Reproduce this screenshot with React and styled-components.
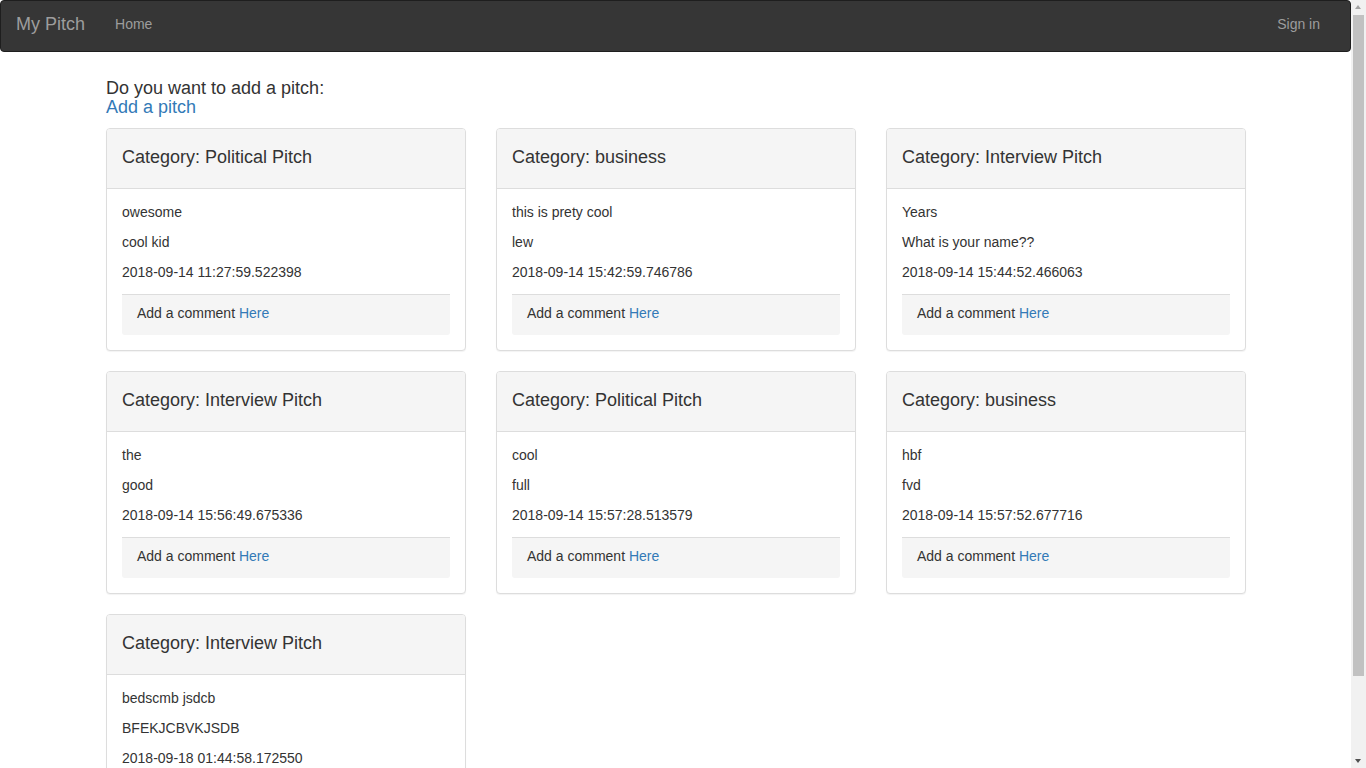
import React from "react";
import styled, { createGlobalStyle } from "styled-components";

const pitches = [
  { category: "Political Pitch", pitch: "owesome", title: "cool kid", posted: "2018-09-14 11:27:59.522398" },
  { category: "business", pitch: "this is prety cool", title: "lew", posted: "2018-09-14 15:42:59.746786" },
  { category: "Interview Pitch", pitch: "Years", title: "What is your name??", posted: "2018-09-14 15:44:52.466063" },
  { category: "Interview Pitch", pitch: "the", title: "good", posted: "2018-09-14 15:56:49.675336" },
  { category: "Political Pitch", pitch: "cool", title: "full", posted: "2018-09-14 15:57:28.513579" },
  { category: "business", pitch: "hbf", title: "fvd", posted: "2018-09-14 15:57:52.677716" },
  { category: "Interview Pitch", pitch: "bedscmb jsdcb", title: "BFEKJCBVKJSDB", posted: "2018-09-18 01:44:58.172550" },
];

const App = () => {
  return (
    <>
      <GlobalStyle />
      <Navbar>
        <Brand href="#">My Pitch</Brand>
        <NavLink href="#">Home</NavLink>
        <NavSpacer />
        <NavLink href="#">Sign in</NavLink>
      </Navbar>
      <Container>
        <Intro>
          Do you want to add a pitch:
          <br />
          <Link href="#">Add a pitch</Link>
        </Intro>
        <Row>
          {pitches.map((p, i) => (
            <Col key={i}>
              <Panel>
                <PanelHeading>
                  <PanelTitle>Category: {p.category}</PanelTitle>
                </PanelHeading>
                <PanelBody>
                  <Text>{p.pitch}</Text>
                  <Text>{p.title}</Text>
                  <Text>{p.posted}</Text>
                  <PanelFooter>
                    Add a comment <Link href="#">Here</Link>
                  </PanelFooter>
                </PanelBody>
              </Panel>
            </Col>
          ))}
        </Row>
      </Container>
      <Scrollbar>
        <ArrowUp />
        <Thumb />
        <ArrowDown />
      </Scrollbar>
    </>
  );
};

const GlobalStyle = createGlobalStyle`
  html, body {
    margin: 0;
  }
  body {
    margin-right: 15px;
    font-family: "Liberation Sans", Arial, sans-serif;
    font-size: 14px;
    line-height: 1.42857;
    color: #333;
    background: #fff;
  }
  * {
    box-sizing: border-box;
  }
`;

const Navbar = styled.nav`
  display: flex;
  align-items: flex-start;
  height: 52px;
  padding: 0 15px 0 0;
  margin-bottom: 27px;
  background-color: #363636;
  border: 1px solid #1e1e1e;
  border-radius: 4px;
`;

const Brand = styled.a`
  padding: 13px 15px 17px;
  font-size: 18px;
  line-height: 20px;
  color: #9d9d9d;
  text-decoration: none;
`;

const NavLink = styled.a`
  padding: 13px 15px 17px;
  line-height: 20px;
  color: #9d9d9d;
  text-decoration: none;
`;

const NavSpacer = styled.div`
  flex: 1;
`;

const Container = styled.div`
  width: 1171px;
  margin: 0 auto;
  padding: 0 15px 0 16px;
`;

const Intro = styled.h4`
  margin: 0 0 11px;
  font-size: 18px;
  font-weight: 500;
  line-height: 19px;
`;

const Link = styled.a`
  color: #337ab7;
  text-decoration: none;
`;

const Row = styled.div`
  display: flex;
  flex-wrap: wrap;
  margin: 0 -15px;
`;

const Col = styled.div`
  width: 390px;
  padding: 0 15px;
`;

const Panel = styled.div`
  margin-bottom: 20px;
  background: #fff;
  border: 1px solid #ddd;
  border-radius: 4px;
  box-shadow: 0 1px 1px rgba(0, 0, 0, 0.05);
`;

const PanelHeading = styled.div`
  padding: 10px 15px;
  background-color: #f5f5f5;
  border-bottom: 1px solid #ddd;
  border-radius: 3px 3px 0 0;
`;

const PanelTitle = styled.h4`
  margin: 9px 0 11px;
  font-size: 18px;
  font-weight: 500;
  line-height: 19px;
`;

const PanelBody = styled.div`
  padding: 14px 15px 15px;
`;

const Text = styled.p`
  margin: 0 0 10px;

  &:nth-of-type(3) {
    margin-bottom: 11px;
  }
`;

const PanelFooter = styled.div`
  padding: 9px 15px 11px;
  background-color: #f5f5f5;
  border-top: 1px solid #ddd;
  border-radius: 0 0 3px 3px;
`;

const Scrollbar = styled.div`
  position: fixed;
  top: 0;
  right: 0;
  width: 15px;
  height: 100vh;
  background: #f1f1f1;
`;

const Thumb = styled.div`
  position: absolute;
  top: 15px;
  left: 2px;
  width: 11px;
  height: 661px;
  background: #c1c1c1;
`;

const ArrowUp = styled.div`
  position: absolute;
  top: 5px;
  left: 4px;
  width: 0;
  height: 0;
  border-left: 3.5px solid transparent;
  border-right: 3.5px solid transparent;
  border-bottom: 4px solid #a3a3a3;
`;

const ArrowDown = styled.div`
  position: absolute;
  bottom: 5px;
  left: 4px;
  width: 0;
  height: 0;
  border-left: 3.5px solid transparent;
  border-right: 3.5px solid transparent;
  border-top: 4px solid #505050;
`;

export default App;
